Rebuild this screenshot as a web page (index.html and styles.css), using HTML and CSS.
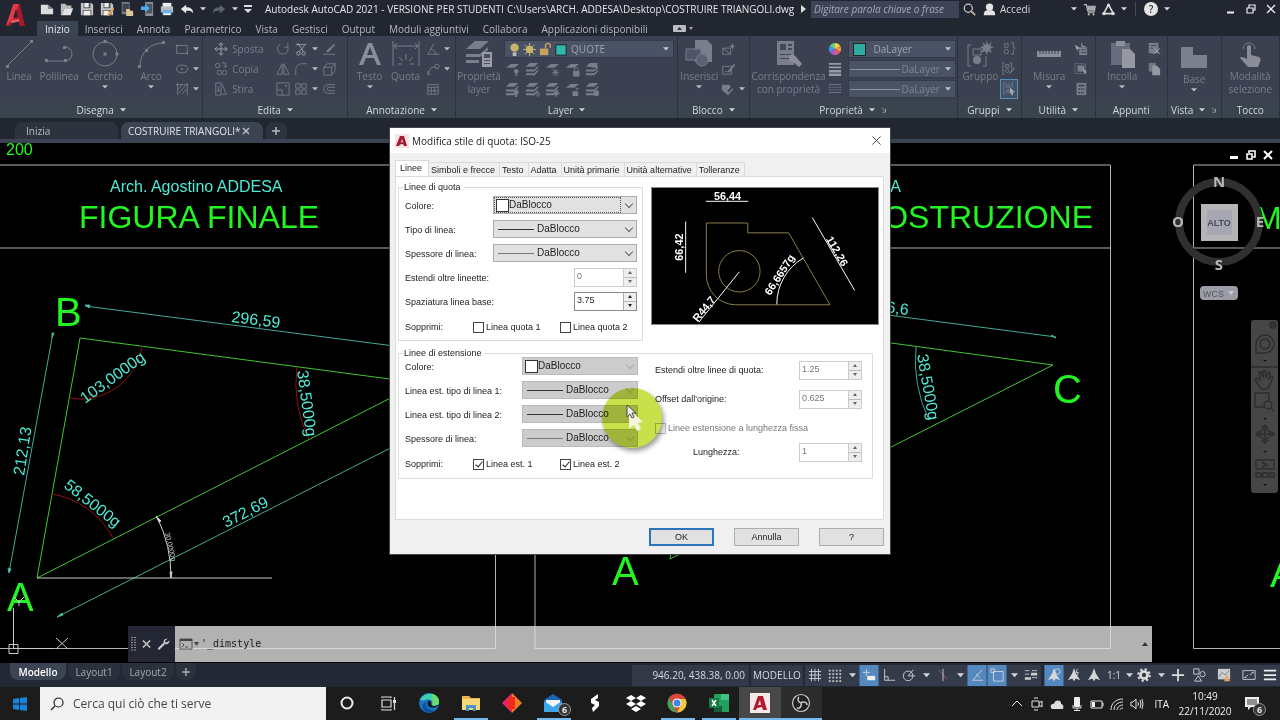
FILE: index.html
```
<!DOCTYPE html>
<html lang="it">
<head>
<meta charset="utf-8">
<title>Autodesk AutoCAD 2021 - COSTRUIRE TRIANGOLI.dwg</title>
<link rel="stylesheet" href="styles.css">
</head>
<body>
<svg class="defs" aria-hidden="true">
  <symbol id="dd" viewBox="0 0 8 5"><path d="M0 0h8L4 4.500z" fill="currentColor"/></symbol>
  <symbol id="rot" viewBox="0 0 16 16"><path d="M5 2.500A6 6 0 1 0 13.500 6M13.500 1.500v4.500h-4" class="ln"/></symbol>
  <symbol id="sheet" viewBox="0 0 16 16"><path d="M1 6l5-4h9l-5 4z" fill="currentColor"/></symbol>
  <symbol id="sheets" viewBox="0 0 16 16"><path d="M1 5l4-4h9l-4 4zM1 8h9l4-4v2l-4 4H1zM1 12h9l4-4v2l-4 4H1z" fill="currentColor"/></symbol>
  <symbol id="doc-a" viewBox="0 0 16 16"><path d="M8 0l2 6 5 8-5-2-2 3-2-3-5 2 5-8z" fill="currentColor"/></symbol>
</svg>

<header class="titlebar">
  <div class="brand"><svg viewBox="0 0 22 26"><path d="M8 1h7l6 24h-6l-1-5-7 1-2 4H0z" fill="#a8192c"/><path d="M8 1h6l-6 17-8 7z" fill="#df3a48"/><path d="M11 6l2 9-5 1z" fill="#20232d"/><path d="M6 19l8-2 1 3-9 2z" fill="#e2606a"/></svg></div>
  <div class="title-main">
    <div class="titlerow">
      <div class="quick">
        <button aria-label="Nuovo"><svg viewBox="0 0 16 16"><path d="M1 3h8l6 5v6H1z" fill="#dcdcdc"/><path d="M9 3v5h6z" fill="#888"/></svg></button>
        <button aria-label="Apri"><svg viewBox="0 0 16 16"><path d="M1 2h5l2 2h5v3H5l-3 8H1z" fill="#bbb"/><path d="M5 7h10l-3 8H2z" fill="#e4e4e4"/></svg></button>
        <button aria-label="Salva"><svg viewBox="0 0 16 16"><path d="M1 1h12l2 2v12H1z" fill="#c6c6c6"/><path d="M4 1h8v6H4zM3 9h10v6H3z" fill="#555"/><path d="M5 1h5v5H5zM4 10h8v5H4z" fill="#eee"/></svg></button>
        <button aria-label="Salva con nome"><svg viewBox="0 0 16 16"><path d="M1 1h12l2 2v12H1z" fill="#c6c6c6"/><path d="M4 1h8v6H4zM3 9h10v6H3z" fill="#555"/><path d="M5 1h5v5H5zM4 10h6v5H4z" fill="#eee"/><path d="M15 6l-6 7-1 3 3-1 5-7z" fill="#e7a65a"/></svg></button>
        <button aria-label="Apri da dispositivo mobile"><svg viewBox="0 0 16 16"><path d="M2 0h9v14H2z" fill="#777c86"/><path d="M3 2h7v9H3z" fill="#3d434e"/><path d="M7 8h4l1 2h3v6H7z" fill="#e0c690"/></svg></button>
        <button aria-label="Salva su dispositivo mobile"><svg viewBox="0 0 16 16"><path d="M6 0h9v16H6z" fill="#8c9099"/><path d="M7 2h7v11H7z" fill="#4a5560"/><path d="M1 5h5V2l5 5-5 5V9H1z" fill="#4faef0"/></svg></button>
        <button aria-label="Stampa"><svg viewBox="0 0 16 16"><path d="M3 1h10v5H3z" fill="#eee"/><path d="M1 5h14v7H1z" fill="#bdbdbd"/><path d="M3 9h10v6H3z" fill="#6bb3ea"/><path d="M4 13h8v2H4z" fill="#fff"/></svg></button>
        <button aria-label="Annulla"><svg viewBox="0 0 16 16"><path d="M1 8l6-5v3c5 0 8 2 8 7-2-3-4-3-8-3v3z" fill="#e6e6e6"/></svg></button>
        <svg class="dd"><use href="#dd"/></svg>
        <button aria-label="Ripeti"><svg viewBox="0 0 16 16"><path d="M15 8L9 3v3C4 6 1 8 1 13c2-3 4-3 8-3v3z" fill="#5c616c"/></svg></button>
        <svg class="dd"><use href="#dd"/></svg>
        <svg class="custom" viewBox="0 0 8 8"><path d="M0 0h8v2H0zM0 4h8L4 8z" fill="#ddd"/></svg>
      </div>
      <h1>Autodesk AutoCAD 2021 - VERSIONE PER STUDENTI</h1>
      <span class="path">C:\Users\ARCH. ADDESA\Desktop\COSTRUIRE TRIANGOLI.dwg</span>
      <svg class="tri" viewBox="0 0 5 8"><path d="M0 0l5 4-5 4z" fill="#ddd"/></svg>
      <input class="help-search" type="text" aria-label="Cerca" placeholder="Digitare parola chiave o frase">
      <div class="account">
        <button aria-label="Cerca"><svg viewBox="0 0 16 16"><circle cx="6.500" cy="6.500" r="5" fill="none" stroke="#ccc" stroke-width="1.500"/><path d="M10 10l5 5" stroke="#c9b59b" stroke-width="2"/></svg></button>
        <button class="login"><svg viewBox="0 0 16 16"><circle cx="8" cy="5" r="4.500" fill="#e4e4e4"/><path d="M1 15c0-5 2-6 5-6h4c3 0 5 1 5 6z" fill="#e4e4e4"/></svg>Accedi</button>
      </div>
      <div class="extras">
        <svg class="dd"><use href="#dd"/></svg>
        <button aria-label="App Store"><svg viewBox="0 0 16 16"><path d="M1 2h3l2 8h8l1-6H5M6 12h8" fill="none" stroke="#bbb" stroke-width="1.500"/><path d="M5 4h10l-1 5H6z" fill="#aaa"/><circle cx="7" cy="14" r="1.300" fill="#bbb"/><circle cx="13" cy="14" r="1.300" fill="#bbb"/></svg></button>
        <button aria-label="Autodesk"><svg viewBox="0 0 16 16"><path d="M8 2L2 13h12z" fill="none" stroke="#ddd" stroke-width="2"/><circle cx="8" cy="3" r="2" fill="#ddd"/><circle cx="2.500" cy="13" r="2.200" fill="#ddd"/><circle cx="13.500" cy="13" r="2.200" fill="#ddd"/></svg></button>
        <svg class="dd"><use href="#dd"/></svg>
        <i class="vsep"></i>
        <button class="help" aria-label="Guida">?</button>
        <svg class="dd"><use href="#dd"/></svg>
      </div>
      <div class="winbtns">
        <button aria-label="Riduci"><svg viewBox="0 0 10 10"><path d="M1 8.500h7" stroke="#eee" stroke-width="2"/></svg></button>
        <button aria-label="Ripristina"><svg viewBox="0 0 10 10"><path d="M1 4h6v5H1zM3 4V1h6v5H7" fill="none" stroke="#eee" stroke-width="1.200"/></svg></button>
        <button aria-label="Chiudi"><svg viewBox="0 0 10 10"><path d="M1 1l8 8M9 1L1 9" stroke="#eee" stroke-width="1.300"/></svg></button>
      </div>
    </div>
    <nav class="ribbon-tabs">
      <button class="on">Inizio</button><button>Inserisci</button><button>Annota</button><button>Parametrico</button><button>Vista</button><button>Gestisci</button><button>Output</button><button>Moduli aggiuntivi</button><button>Collabora</button><button>Applicazioni disponibili</button>
      <svg class="minrib" viewBox="0 0 20 8"><rect width="13" height="7" rx="1" fill="#b9bcc2"/><path d="M4 5h5L6.500 2z" fill="#333"/><path d="M16 2h4l-2 3z" fill="#aaa"/></svg>
    </nav>
  </div>
</header>

<section class="ribbon">
  <div class="panel p-dis">
    <div class="pbody">
      <button class="big w34"><svg viewBox="0 0 28 28"><path d="M2 26L26 2" class="ln"/><path d="M1 25h3v3H1zM25 0h3v3h-3z" fill="currentColor"/></svg>Linea</button>
      <button class="big w44"><svg viewBox="0 0 28 28"><path d="M2 21h18a7 7 0 0 0 0-14" class="ln"/><path d="M0 19h3v3H0zM19 19h3v3h-3zM18 6h3v3h-3z" fill="currentColor"/></svg>Polilinea</button>
      <button class="big w48"><svg viewBox="0 0 28 28"><circle cx="14" cy="14" r="12" class="ln"/><path d="M12.500 12.500h3v3h-3zM24.500 12.500h3v3h-3zM12.500 0h3v3h-3z" fill="currentColor"/></svg>Cerchio<svg class="dd"><use href="#dd"/></svg></button>
      <button class="big w44"><svg viewBox="0 0 28 28"><path d="M3 26C3 12 14 3 26 3" class="ln"/><path d="M1 25h3v3H1zM25 1h3v3h-3zM8 9h3v3H8z" fill="currentColor"/></svg>Arco<svg class="dd"><use href="#dd"/></svg></button>
      <div class="col">
        <button class="sm"><svg viewBox="0 0 16 16"><rect x="2" y="4" width="12" height="9" class="ln"/><path d="M1 3h2v2H1zM13 12h2v2h-2z" fill="currentColor"/></svg><svg class="dd"><use href="#dd"/></svg></button>
        <button class="sm"><svg viewBox="0 0 16 16"><ellipse cx="8" cy="8" rx="6.500" ry="4.500" class="ln"/><circle cx="8" cy="8" r="1.200" fill="currentColor"/></svg><svg class="dd"><use href="#dd"/></svg></button>
        <button class="sm"><svg viewBox="0 0 16 16"><path d="M3 1v14M14 1v14M4 8l4-5M4 13l9-10M8 14l5-6M1 3h14" class="ln"/></svg><svg class="dd"><use href="#dd"/></svg></button>
      </div>
    </div>
    <div class="cap">Disegna<svg class="dd"><use href="#dd"/></svg></div>
  </div>
  <div class="panel p-edi">
    <div class="pbody">
      <div class="col w62">
        <button class="sm"><svg viewBox="0 0 16 16"><path d="M8 1v14M1 8h14M5.500 3.500L8 1l2.500 2.500M5.500 12.500L8 15l2.500-2.500M3.500 5.500L1 8l2.500 2.500M12.500 5.500L15 8l-2.500 2.500" class="ln br"/></svg>Sposta</button>
        <button class="sm"><svg viewBox="0 0 16 16"><circle cx="4" cy="4" r="2.500" class="ln"/><circle cx="6" cy="12" r="2.500" class="ln"/><circle cx="12" cy="12" r="2.500" class="ln"/><path d="M9 1h4v5M11 4l2 2 2-2" class="ln"/></svg>Copia</button>
        <button class="sm"><svg viewBox="0 0 16 16"><path d="M2 1h6v14H2zM9 2l5 12H9M5 5v6M3 9l2 2 2-2" class="ln"/></svg>Stira</button>
      </div>
      <div class="col">
        <button class="sm"><svg><use href="#rot"/></svg></button>
        <button class="sm"><svg viewBox="0 0 16 16"><path d="M7 2v12H1zM9 2v12h6z" class="ln"/></svg></button>
        <button class="sm"><svg viewBox="0 0 16 16"><path d="M1 1h14v14H1zM1 9h6v6M10 4h2v2" class="ln"/></svg></button>
      </div>
      <div class="col">
        <button class="sm"><svg viewBox="0 0 16 16"><path d="M2 3h12M4 1l7 10M12 4L6 11" class="ln br"/><circle cx="5" cy="13" r="2" class="ln br"/><circle cx="11" cy="13" r="2" class="ln br"/></svg><svg class="dd"><use href="#dd"/></svg></button>
        <button class="sm"><svg viewBox="0 0 16 16"><path d="M2 15V9c0-4 3-7 7-7h6" class="ln"/></svg><svg class="dd"><use href="#dd"/></svg></button>
        <button class="sm"><svg viewBox="0 0 16 16"><path d="M2 2h5v5H2zM9 2h5v5H9zM2 9h5v5H2zM9 9h5v5H9z" class="ln"/></svg><svg class="dd"><use href="#dd"/></svg></button>
      </div>
      <div class="col">
        <button class="sm"><svg viewBox="0 0 16 16"><path d="M14 2l1 1-7 8-3 1 1-3z" fill="currentColor"/><path d="M1 14h14" class="ln"/></svg></button>
        <button class="sm"><svg viewBox="0 0 16 16"><path d="M2 6h9v9H2zM2 6l4-4h9v8l-4 5M11 6l4-4" class="ln"/></svg></button>
        <button class="sm"><svg viewBox="0 0 16 16"><path d="M15 3H7a5 5 0 0 0 0 10h8M15 6H8a2 2 0 0 0 0 4h7" class="ln"/></svg></button>
      </div>
    </div>
    <div class="cap">Edita<svg class="dd"><use href="#dd"/></svg></div>
  </div>
  <div class="panel p-ann">
    <div class="pbody">
      <button class="big w34"><svg viewBox="0 0 28 28"><path d="M12 3h4l9 22h-4l-3-7h-8l-3 7H3zM14 7l-3 8h6z" fill="#8b8e9b"/></svg>Testo<svg class="dd"><use href="#dd"/></svg></button>
      <button class="big w34"><svg viewBox="0 0 28 28"><path d="M1 1v25M27 1v25M2 6h24M5 3L2 6l3 3M23 3l3 3-3 3M14 14v6M7 17l4 4M21 17l-4 4M6 24h4M18 24h4" class="ln"/></svg>Quota</button>
      <div class="col">
        <button class="sm"><svg viewBox="0 0 16 16"><path d="M2 14L9 2M2 14h13M5 8q6 1 6 6" class="ln"/></svg><svg class="dd"><use href="#dd"/></svg></button>
        <button class="sm"><svg viewBox="0 0 16 16"><path d="M2 14l4-8h5M2 10v4h3" class="ln"/><circle cx="12.500" cy="5" r="2.500" class="ln"/></svg><svg class="dd"><use href="#dd"/></svg></button>
        <button class="sm"><svg viewBox="0 0 16 16"><path d="M2 3h12v11H2zM2 6h12M2 10h12M6 6v8M10 6v8" class="ln"/></svg></button>
      </div>
    </div>
    <div class="cap">Annotazione<svg class="dd"><use href="#dd"/></svg></div>
  </div>
  <div class="panel p-lay">
    <div class="pbody">
      <button class="big w46"><svg viewBox="0 0 28 28"><path d="M1 9l9-8h14l-9 8zM1 14h14l8-7v3l-8 7H1zM1 20h13v3H1z" fill="currentColor"/><path d="M17 12h10v15H17z" fill="#9a9ca6"/><path d="M19 14h6v4h-6zM19 20h6v1h-6zM19 23h6v1h-6z" fill="#4a4e5e"/></svg><span>Proprietà<br>layer</span></button>
      <div class="laygrid">
        <div class="combo">
          <svg class="states" viewBox="0 0 64 16"><circle cx="7" cy="6" r="4.500" fill="#c9b36a"/><path d="M5 11h4v4H5z" fill="#bbb"/><circle cx="23" cy="8" r="4" fill="#c9b36a"/><path d="M23 1v14M16 8h14M18 3l10 10M28 3L18 13" stroke="#c9b36a"/><path d="M34 7h9v7h-9z" fill="#c9a35a"/><path d="M40 7V4a2.500 2.500 0 0 1 5 0v2" fill="none" stroke="#c9a35a" stroke-width="1.500"/><rect x="51" y="3" width="11" height="11" fill="#2eb8aa" stroke="#222"/></svg>
          <select aria-label="Layer corrente"><option>QUOTE</option></select><svg class="dd"><use href="#dd"/></svg>
        </div>
        <div class="icons5">
          <svg viewBox="0 0 16 16"><use href="#sheet"/><circle cx="12" cy="10" r="2.500" fill="currentColor"/><path d="M11 13h2v2h-2z" fill="currentColor"/></svg>
          <svg viewBox="0 0 16 16"><use href="#sheets"/><path d="M9 15l5-6" class="ln"/></svg>
          <svg viewBox="0 0 16 16"><use href="#sheet"/><path d="M11 7v8M7 11h8M8 8l6 6M14 8l-6 6" class="ln"/></svg>
          <svg viewBox="0 0 16 16"><use href="#sheet"/><path d="M9 10h6v5H9zM10 10V8a2 2 0 0 1 4 0v2" class="ln"/><path d="M9 10h6v5H9z" fill="currentColor"/></svg>
          <svg viewBox="0 0 16 16"><use href="#sheets"/><path d="M7 1h6v5H7z" fill="currentColor"/></svg>
        </div>
        <div class="icons5">
          <svg viewBox="0 0 16 16"><use href="#sheets"/><circle cx="12" cy="11" r="2.500" fill="currentColor"/><path d="M11 13h2v3h-2z" fill="currentColor"/></svg>
          <svg viewBox="0 0 16 16"><use href="#sheets"/><path d="M8 15l5-5v5h2v-4" class="ln"/></svg>
          <svg viewBox="0 0 16 16"><use href="#sheets"/><circle cx="12" cy="12" r="2.500" fill="currentColor"/><path d="M12 8v8M8 12h8" class="ln"/></svg>
          <svg viewBox="0 0 16 16"><use href="#sheet"/><path d="M8 10h6v5H8z" fill="currentColor"/><path d="M12 10V7a2 2 0 0 1 3 1" class="ln"/></svg>
          <svg viewBox="0 0 16 16"><use href="#sheets"/><circle cx="12" cy="12" r="3" fill="currentColor"/></svg>
        </div>
      </div>
    </div>
    <div class="cap">Layer<svg class="dd"><use href="#dd"/></svg></div>
  </div>
  <div class="panel p-blo">
    <div class="pbody">
      <button class="big w40"><svg viewBox="0 0 28 28"><path d="M10 0h12l5 5v17H10z" fill="currentColor"/><path d="M1 9h15v11H1z" fill="#50546a" stroke="currentColor"/><circle cx="17" cy="20" r="6" fill="#5c6070" stroke="currentColor"/></svg>Inserisci<svg class="dd"><use href="#dd"/></svg></button>
      <div class="col">
        <button class="sm"><svg viewBox="0 0 16 16"><path d="M2 7h9v7H2zM2 7l9 7" class="ln"/><path d="M13 1l1 3 2 1-2 1-1 3-1-3-3-1 3-1z" fill="currentColor"/></svg></button>
        <button class="sm"><svg viewBox="0 0 16 16"><path d="M2 5h10v9H2zM5 11h6" class="ln"/><path d="M15 2l-7 8 1 2 7-8z" fill="currentColor"/></svg></button>
        <button class="sm"><svg viewBox="0 0 16 16"><path d="M1 3h8l5 5-6 7-7-6z" fill="currentColor"/><path d="M15 3L8 11" stroke="#383d4d" stroke-width="2"/></svg><svg class="dd"><use href="#dd"/></svg></button>
      </div>
    </div>
    <div class="cap">Blocco<svg class="dd"><use href="#dd"/></svg></div>
  </div>
  <div class="panel p-pro">
    <div class="pbody">
      <button class="big w76"><svg viewBox="0 0 28 28"><path d="M2 1h17v24H2z" fill="currentColor"/><path d="M5 4h6v6H5zM13 4h4v2h-4zM13 8h4v2h-4zM5 14h11v1H5zM5 18h11v1H5z" fill="#42475a"/><path d="M14 16l4-2 4 4 5 6-3 3-6-5-4-1z" fill="#8b8d99"/></svg><span>Corrispondenza<br>con proprietà</span></button>
      <div class="props">
        <svg viewBox="0 0 16 16"><path d="M8 8V1a7 7 0 0 1 6 3.500z" fill="#f9d24a"/><path d="M8 8l6-3.500a7 7 0 0 1 0 7z" fill="#f1953e"/><path d="M8 8l6 3.500A7 7 0 0 1 8 15z" fill="#e25b6c"/><path d="M8 8v7a7 7 0 0 1-6-3.500z" fill="#a35bd0"/><path d="M8 8l-6 3.500a7 7 0 0 1 0-7z" fill="#3f9be8"/><path d="M8 8L2 4.500A7 7 0 0 1 8 1z" fill="#5fd08a"/></svg>
        <div class="combo"><i class="swatch"></i><select aria-label="Colore oggetto"><option>DaLayer</option></select><svg class="dd"><use href="#dd"/></svg></div>
        <svg viewBox="0 0 16 16"><path d="M1 2h14M1 6h14" stroke="#999ca6" stroke-width="2"/><path d="M1 10.500h14M1 14.500h14" stroke="#999ca6" stroke-width="3"/></svg>
        <div class="combo line"><select aria-label="Spessore di linea"><option>DaLayer</option></select><svg class="dd"><use href="#dd"/></svg></div>
        <svg viewBox="0 0 16 16"><path d="M1 3h14M1 12h14" stroke="#7c8090"/><path d="M1 6h14M1 9h14" stroke="#7c8090" stroke-dasharray="2 1"/></svg>
        <div class="combo line"><select aria-label="Tipo di linea"><option>DaLayer</option></select><svg class="dd"><use href="#dd"/></svg></div>
      </div>
    </div>
    <div class="cap">Proprietà<svg class="dd"><use href="#dd"/></svg><svg class="launch" viewBox="0 0 8 8"><path d="M1 1l5 5M6 2v5H2" class="ln br"/></svg></div>
  </div>
  <div class="panel p-gru">
    <div class="pbody">
      <button class="big w40"><svg viewBox="0 0 28 28"><path d="M5 5H2v21h3M17 26h3V16" class="ln"/><rect x="7" y="9" width="8" height="6" class="ln"/><circle cx="11" cy="20" r="4" fill="currentColor"/><path d="M21 0l1 5 4-3-2 4 4 1-4 2 2 4-4-2-1 4-2-4-4 2 2-4-3-2 4-1-2-4 4 3z" fill="currentColor"/></svg>Gruppo</button>
      <div class="col">
        <button class="sm"><svg viewBox="0 0 16 16"><path d="M3 2h4v4H3zM10 1h3v5l2 1-2 2v5h-3" class="ln"/><circle cx="5" cy="11" r="2.500" class="ln"/></svg></button>
        <button class="sm"><svg viewBox="0 0 16 16"><path d="M3 1H1v13h2M9 1h2v7M4 3h4v3H4z" class="ln"/><circle cx="6" cy="10" r="2" class="ln"/><path d="M14 7l-5 6" class="ln br"/></svg></button>
        <button class="sm pressed"><svg viewBox="0 0 16 16"><path d="M4 1H2v13h2M10 1h2v5M5 3h4v3H5zM5 9h3v3H5z" class="ln"/><path d="M9 6l6 6-3 0 1 3-2 0-1-3-1 2z" fill="#aaa"/></svg></button>
      </div>
    </div>
    <div class="cap">Gruppi<svg class="dd"><use href="#dd"/></svg></div>
  </div>
  <div class="panel p-uti">
    <div class="pbody">
      <button class="big w46"><svg viewBox="0 0 28 28"><path d="M2 11h24v6H2z" fill="#8b8e9b"/><path d="M5 11v3M8 11v3M11 11v3M14 11v3M17 11v3M20 11v3M23 11v3" stroke="#3f4354"/></svg>Misura<svg class="dd"><use href="#dd"/></svg></button>
      <div class="col">
        <button class="sm"><svg viewBox="0 0 16 16"><path d="M6 6h9v9H6z" fill="currentColor"/><path d="M8 9h6M8 12h6" stroke="#3f4354"/><path d="M1 3l6 4-3 1v3z" fill="#aaa"/><path d="M9 1v4h4" class="ln br"/></svg></button>
        <button class="sm"><svg viewBox="0 0 16 16"><path d="M1 2h12v11H1z" class="ln" stroke-dasharray="2 1"/><path d="M4 4h8v7H4z" fill="currentColor"/><path d="M10 7l5 5h-2v3z" fill="#aaa"/></svg></button>
        <button class="sm"><svg viewBox="0 0 16 16"><path d="M3 1h11v14H3z" fill="currentColor"/><path d="M5 3h7v2H5zM5 7h2v2H5zM8 7h2v2H8zM11 7h1v2h-1zM5 11h2v2H5zM8 11h2v2H8zM11 11h1v2h-1z" fill="#3f4354"/></svg></button>
      </div>
    </div>
    <div class="cap">Utilità<svg class="dd"><use href="#dd"/></svg></div>
  </div>
  <div class="panel p-app">
    <div class="pbody">
      <button class="big w46"><svg viewBox="0 0 28 28"><path d="M3 3h19v22H3z" fill="#686c7c"/><path d="M8 1h9v5H8z" fill="#8d909b"/><path d="M14 9h8l5 5v14H14z" fill="#9698a2"/></svg>Incolla<svg class="dd"><use href="#dd"/></svg></button>
      <div class="col">
        <button class="sm"><svg viewBox="0 0 16 16"><path d="M2 1h11v12H2z" fill="currentColor"/><path d="M4 4h7M4 7h5" stroke="#3f4354"/><path d="M7 6l8 8M15 7l-8 7" class="ln br"/></svg></button>
        <button class="sm"><svg viewBox="0 0 16 16"><path d="M2 1h8v10H2z" fill="#737685"/><path d="M6 4h5l4 4v7H6z" fill="#9698a2"/></svg></button>
      </div>
    </div>
    <div class="cap">Appunti</div>
  </div>
  <div class="panel p-vis">
    <div class="pbody"><button class="big tall w46"><svg viewBox="0 0 28 28"><path d="M1 4h12v8h14v13H1z" fill="#7c7f8d"/></svg>Base<svg class="dd"><use href="#dd"/></svg></button></div>
    <div class="cap">Vista<svg class="dd"><use href="#dd"/></svg><svg class="launch" viewBox="0 0 8 8"><path d="M1 1l5 5M6 2v5H2" class="ln br"/></svg></div>
  </div>
  <div class="panel p-toc">
    <div class="pbody"><button class="big w50"><svg viewBox="0 0 28 28"><path d="M11 7a2 2 0 0 1 4 0v8l8 2c2 1 2 3 1 5l-2 5H12l-8-9c1-2 4-1 7 1z" fill="#8a8c98"/><path d="M7 9a6 6 0 1 1 12 0" class="ln"/></svg><span>Modalità<br>selezione</span></button></div>
    <div class="cap">Tocco</div>
  </div>
</section>

<nav class="doctabs">
  <button class="dt start">Inizia</button>
  <button class="dt on">COSTRUIRE TRIANGOLI*<svg viewBox="0 0 8 8"><path d="M1 1l6 6M7 1L1 7" stroke="#bbb" stroke-width="1.500"/></svg></button>
  <button class="dt plus" aria-label="Nuova scheda"><svg viewBox="0 0 8 8"><path d="M4 0v8M0 4h8" stroke="#bbb" stroke-width="1.500"/></svg></button>
</nav>

<main class="canvas">
  <svg class="drawing" viewBox="0 143 1280 520" preserveAspectRatio="xMidYMid slice">
    <g class="frame">
      <path d="M0 165H495.500V648.500H0M0 248H495"/>
      <path d="M535 165H1110.500V648.500H535zM535 248H1110"/>
      <path d="M1280 165H1193.500V648.500H1280M1193 248H1280"/>
    </g>
    <g class="green">
      <path d="M80 338L420 383L37 578z"/>
      <path d="M891 343L1053 365L670 559L680 500"/>
    </g>
    <g class="cy">
      <path d="M85 306L425 350M53 333L9 573M57 617L430 428M880 314L1056 337"/>
      <path d="M916 347A138 138 0 0 0 929 420"/>
      <path class="tip" d="M85 305l5 0-1 3zM52 333l2 0-2 5zM9 573l-1-5 3 1zM57 617l5-4 1 2zM1056 338l-5-2 1-1z"/>
    </g>
    <g class="red">
      <path d="M142 346A62 62 0 0 1 70 398M52 494A85 85 0 0 1 113 538M297 367A124 124 0 0 0 309 439"/>
    </g>
    <g class="white"><path d="M37 578H272M157 517A134 134 0 0 1 171 578"/><path d="M156 516l5 5-2 1zM171 578l-1-6h2z" fill="#ddd"/></g>
    <g class="gt">
      <text x="6" y="155" font-size="16">200</text>
      <text x="79" y="228" font-size="32">FIGURA FINALE</text>
      <text x="1093" y="228" font-size="32" text-anchor="end">COSTRUZIONE</text>
      <text x="1255" y="229" font-size="32">M</text>
      <text x="55" y="326" font-size="40">B</text>
      <text x="7" y="611" font-size="40">A</text>
      <text x="612" y="585" font-size="40">A</text>
      <text x="1053" y="403" font-size="40">C</text>
      <text x="1270" y="587" font-size="40">A</text>
    </g>
    <g class="ct">
      <text x="110" y="192">Arch. Agostino ADDESA</text>
      <text x="901" y="192" text-anchor="end">Arch. Agostino ADDESA</text>
      <text transform="translate(231 322) rotate(7)">296,59</text>
      <text transform="translate(908 315) rotate(7)" text-anchor="end">296,6</text>
      <text transform="translate(24 476) rotate(-81)">212,13</text>
      <text transform="translate(226 528) rotate(-27)">372,69</text>
      <text transform="translate(85 404) rotate(-36)">103,0000g</text>
      <text transform="translate(63 487) rotate(38)">58,5000g</text>
      <text transform="translate(297 371) rotate(82)">38,5000g</text>
      <text transform="translate(917 355) rotate(80)">38,5000g</text>
      <text class="tiny" transform="translate(165 533) rotate(77)">30,0000g</text>
    </g>
    <g class="ucs"><path d="M13.500 608V648.500H54M9 644.500h9v9H9zM56 638l12 11M68 638L56 649M14 597l5 5 5-5M19 602v4"/></g>
    <g class="cube">
      <circle cx="1219" cy="222" r="40"/>
      <rect x="1201" y="204" width="37" height="37" fill="#b5b5b7"/><rect x="1207" y="210" width="25" height="25" fill="#a6a7b0"/>
      <text x="1219" y="226" class="alto">ALTO</text>
      <text x="1219" y="187">N</text><text x="1219" y="270">S</text><text x="1178" y="227">O</text><text x="1260" y="227">E</text>
      <rect x="1200" y="286" width="38" height="14" rx="4" fill="#9d9da8"/><text x="1203" y="297" class="wcs">WCS</text><path d="M1228 291h6l-3 4z" fill="#c8c8d4"/>
    </g>
    <g class="nav">
      <rect x="1251" y="320" width="27" height="173" rx="3"/>
      <g class="ni"><circle cx="1273" cy="325" r="3"/><path d="M1271 323l4 4M1275 323l-4 4"/><path d="M1256 344a9 9 0 1 1 9 9h-9z"/><circle cx="1265" cy="344" r="5"/><path d="M1251 367h27"/>
      <path d="M1258 384l-3-5 2-1 3 2-1-8 2 0 2 6 0-7 2 0 1 7 2-6 2 1-1 6 3-3 1 1-3 8-3 4h-6z"/>
      <path d="M1255 393h14v7M1255 393v14h9"/><circle cx="1268" cy="405" r="4"/><path d="M1271 408l3 3"/>
      <path d="M1265 425v18M1256 434h18M1262 428l3-3 3 3M1262 440l3 3 3-3M1259 431l-3 3 3 3M1271 431l3 3-3 3"/><circle cx="1265" cy="434" r="5"/>
      <path d="M1256 460h18v9h-18zM1262 462l5 3-5 2M1256 473h5v4h-5zM1263 473h5v4h-5zM1270 473h4v4h-4z"/></g>
      <path d="M1263 360h4l-2 2zM1263 418h4l-2 2zM1263 451h4l-2 2zM1263 484h4l-2 2z" fill="#111"/>
    </g>
  </svg>
  <div class="docbtns">
    <button aria-label="Riduci disegno"><svg viewBox="0 0 10 10"><path d="M1 7.500h8" stroke="#fff" stroke-width="3"/></svg></button>
    <button aria-label="Ripristina disegno"><svg viewBox="0 0 10 10"><path d="M1 4h5v5H1zM3 3V1h6v6H7" fill="none" stroke="#fff" stroke-width="1.600"/></svg></button>
    <button aria-label="Chiudi disegno"><svg viewBox="0 0 10 10"><path d="M1 1l8 8M9 1L1 9" stroke="#fff" stroke-width="2"/></svg></button>
  </div>
  <form class="cmd">
    <div class="cmdtools">
      <svg viewBox="0 0 5 16"><path d="M1 1v15M4 1v15" stroke="#bbb" stroke-width="1.500" stroke-dasharray="1 1.500"/></svg>
      <button type="button" aria-label="Chiudi riga di comando"><svg viewBox="0 0 10 10"><path d="M1 1l8 8M9 1L1 9" stroke="#ccc" stroke-width="1.600"/></svg></button>
      <button type="button" aria-label="Personalizza"><svg viewBox="0 0 14 14"><path d="M1 13L8 6" stroke="#ccc" stroke-width="2.500"/><path d="M12 1L9 3v2h2l3-2c0 4-3 5-5 4L7 5c0-3 2-5 5-4z" fill="#ccc"/></svg></button>
    </div>
    <label class="prompt" for="cmdline"><svg viewBox="0 0 20 12"><path d="M1 1h12v10H1z" fill="none" stroke="#555"/><path d="M1 1h12v2H1z" fill="#444"/><path d="M3 5l2 2-2 2M6 9h3" fill="none" stroke="#555"/><path d="M15 4h5l-2.500 4z" fill="#444"/></svg></label>
    <input id="cmdline" type="text" aria-label="Riga di comando" value="'_dimstyle">
    <svg class="cmdup" viewBox="0 0 6 4"><path d="M0 4h6L3 0z" fill="#333"/></svg>
  </form>
</main>

<footer class="status">
  <nav class="layouts"><button class="on">Modello</button><button>Layout1</button><button>Layout2</button><button aria-label="Nuovo layout"><svg viewBox="0 0 8 8"><path d="M4 0v8M0 4h8" stroke="#aaa" stroke-width="1.500"/></svg></button></nav>
  <div class="stright">
    <span class="coord">946.20, 438.38, 0.00</span><button class="model">MODELLO</button>
    <div class="sticons">
      <button><svg viewBox="0 0 16 16"><path d="M4 1v14M8 1v14M12 1v14M1 4h14M1 8h14M1 12h14" class="st"/></svg></button>
      <button><svg viewBox="0 0 16 16"><path d="M1 3h14M1 7h14M1 11h14M1 15h14" stroke="#ccc" stroke-width="2" stroke-dasharray="2 2"/></svg></button>
      <button class="n"><svg class="dd"><use href="#dd"/></svg></button>
      <button class="act"><svg viewBox="0 0 16 16"><path d="M5 1v8M1 5h8" class="st"/><path d="M6 9h9v5H6z" fill="#eee"/></svg></button>
      <button><svg viewBox="0 0 16 16"><path d="M3 1v13h12M3 10h4v4" class="st"/></svg></button>
      <button><svg viewBox="0 0 16 16"><circle cx="7" cy="9" r="5.500" class="st"/><path d="M7 9h8M7 9l6-7" class="st"/></svg></button>
      <button class="n"><svg class="dd"><use href="#dd"/></svg></button>
      <button><svg viewBox="0 0 16 16"><path d="M3 2l10 11" stroke="#b65b5b"/><path d="M8 1v14" class="st"/></svg></button>
      <button class="n"><svg class="dd"><use href="#dd"/></svg></button>
      <button class="act"><svg viewBox="0 0 16 16"><path d="M14 2L3 14h12" class="st"/><path d="M7 7l4 4" class="st"/></svg></button>
      <button class="act"><svg viewBox="0 0 16 16"><path d="M4 4h11v11H4zM1 1h4v4H1z" class="st"/></svg></button>
      <button class="n"><svg class="dd"><use href="#dd"/></svg></button>
      <button><svg viewBox="0 0 16 16"><path d="M1 3h5M1 7h5M9 3h6M9 11h6" stroke="#ccc"/><path d="M1 12h7M8 7h7" stroke="#ccc" stroke-width="3"/></svg></button>
      <i class="gap"></i>
      <button class="act"><svg viewBox="0 0 16 16"><use href="#doc-a"/><circle cx="12" cy="4" r="3" class="st"/></svg></button>
      <button><svg viewBox="0 0 16 16"><use href="#doc-a"/><path d="M12 1l-2 4h3l-2 4" class="st"/></svg></button>
      <button><svg viewBox="0 0 16 16"><use href="#doc-a"/></svg></button>
      <button class="scale">1:1</button>
      <button class="nn"><svg class="dd"><use href="#dd"/></svg></button>
      <button><svg viewBox="0 0 16 16"><circle cx="8" cy="8" r="4" fill="none" stroke="#ddd" stroke-width="3"/><circle cx="8" cy="8" r="6.500" fill="none" stroke="#ddd" stroke-width="2.500" stroke-dasharray="2.500 2.600"/></svg></button>
      <button class="n"><svg class="dd"><use href="#dd"/></svg></button>
      <button><svg viewBox="0 0 16 16"><path d="M8 1v14M1 8h14" stroke="#ddd" stroke-width="2"/></svg></button>
      <button class="w22"><svg viewBox="0 0 16 16"><path d="M2 1h6v6H2zM7 9l4 6H3z" class="st"/><circle cx="12" cy="7" r="3" class="st"/></svg></button>
      <button class="w28"><svg viewBox="0 0 16 16"><path d="M1 1h14v12H1z" fill="#ccc"/><path d="M2 10l4-5 3 3 5-5" fill="none" stroke="#777"/><path d="M11 7l4 8H8z" fill="#e8a36a"/></svg></button>
      <button class="w22"><svg viewBox="0 0 16 16"><path d="M1 3h14v10H1zM3 10v1h2M13 6V5h-2M4 10l3-2M12 6L9 8" class="st"/></svg></button>
      <button><svg viewBox="0 0 16 16"><path d="M1 3h14M1 8h14M1 13h14" stroke="#eee" stroke-width="2"/></svg></button>
    </div>
  </div>
</footer>

<footer class="taskbar">
  <button class="win" aria-label="Start"><svg viewBox="0 0 14 14"><path d="M0 2l6-1v5.500H0zM7 1l7-1v6.500H7zM0 7.500h6V13l-6-1zM7 7.500h7V14l-7-1z" fill="#1683dc"/></svg></button>
  <label class="wsearch"><svg viewBox="0 0 14 14"><circle cx="8.500" cy="5.500" r="4.500" fill="none" stroke="#222" stroke-width="1.200"/><path d="M5 9l-4 4" stroke="#222" stroke-width="1.300"/></svg><input type="text" aria-label="Cerca" placeholder="Cerca qui ciò che ti serve"></label>
  <div class="apps">
    <button><svg viewBox="0 0 20 20"><circle cx="10" cy="10" r="5.500" fill="none" stroke="#eee" stroke-width="2"/></svg></button>
    <button><svg viewBox="0 0 20 20"><path d="M4 7h9v7H4zM4 5V4h9v1M4 16v1h9v-1M16.500 4v3M16.500 10v7" fill="none" stroke="#ddd" stroke-width="1.200"/><path d="M15 7h3v3h-3z" fill="#ddd"/></svg></button>
    <button><svg viewBox="0 0 20 20"><circle cx="10" cy="10" r="10" fill="#1a74c8"/><path d="M1 7C5-2 19-1 20 8c0 5-5 5-7 4 2-4-3-7-7-5-3 1-4 0-5 0z" fill="#3fd0b0"/><path d="M13 1c5 1 8 5 7 9-1 3-5 3-7 2l1-4z" fill="#6ddc6a"/><path d="M7 9c-2 6 4 9 9 8-6 6-16 0-11-7z" fill="#0d4f9c"/><path d="M9 8c-2 5 2 8 8 6l2-1v-1c-3 2-7 1-7-1 1-2-1-4-3-3z" fill="#1c1c1c"/></svg></button>
    <button class="run"><svg viewBox="0 0 20 20"><path d="M1 3h7l2 2h9v12H1z" fill="#e7b64a"/><path d="M1 6h18v11H1z" fill="#f7d777"/><path d="M5 18v-6h10v6h-3v-3H8v3z" fill="#4a92cc"/></svg></button>
    <button><svg viewBox="0 0 20 20"><path d="M10 0v20L0 10z" fill="#e8236b"/><path d="M10 0l10 10-10 10z" fill="#ef7d23"/><path d="M6 4h7v12H6z" fill="#ef2b20"/></svg></button>
    <button class="run badge"><svg viewBox="0 0 20 20"><path d="M1 7l9-6 9 6v12H1z" fill="#1b65b5"/><path d="M3 7h14v9H3z" fill="#f1f6fa"/><path d="M1 8l9 6 9-6v11H1z" fill="#3ba7ea"/></svg><b>6</b></button>
    <button><svg viewBox="0 0 20 20"><path d="M13 1L6 6v4l4 2-3 3 1 4 6-6V9l-4-2 3-2z" fill="#fff"/></svg></button>
    <button><svg viewBox="0 0 20 20"><path d="M5 2l5 3-5 3-5-3zM15 2l5 3-5 3-5-3zM5 8l5 3-5 3-5-3zM15 8l5 3-5 3-5-3zM10 13l5 3-5 3-5-3z" fill="#fff"/></svg></button>
    <button class="run"><svg viewBox="0 0 20 20"><circle cx="10" cy="10" r="9.500" fill="#d9473c"/><path d="M2 5l6 11 2 3.500A9.500 9.500 0 0 1 2 5z" fill="#43a25a"/><path d="M10 6h8.600a9.500 9.500 0 0 1-8.600 13.500L14 12z" fill="#f0c83c"/><circle cx="10" cy="10" r="4.500" fill="#fff"/><circle cx="10" cy="10" r="3.500" fill="#4385e8"/></svg></button>
    <button class="run"><svg viewBox="0 0 20 20"><path d="M5 1h15v18H5z" fill="#22a060"/><path d="M12 1h8v6h-8z" fill="#41c483"/><path d="M5 13h8v6H5z" fill="#155f38"/><path d="M0 5h10v10H0z" fill="#137c42"/><path d="M3 7l4 6M7 7l-4 6" stroke="#fff" stroke-width="1.500"/></svg></button>
    <button class="run cur"><svg viewBox="0 0 20 20"><path d="M0 0h20v20H0z" fill="#f5e8e6"/><path d="M8 3h5l4 14h-4l-1-3-5 1-1 2H3z" fill="#b01c2e"/><path d="M10 7l1 5-3 0z" fill="#f5e8e6"/></svg></button>
    <button class="run cur2"><svg viewBox="0 0 20 20"><circle cx="10" cy="10" r="8.500" fill="#222" stroke="#ccc" stroke-width="1.200"/><path d="M10 10c-3-1-4-4-2-6M10 10c2-2 6-1 6 2M10 10c1 3-1 6-4 5" fill="none" stroke="#ccc" stroke-width="1.500"/></svg></button>
  </div>
  <div class="tray">
    <svg viewBox="0 0 14 14"><path d="M2 9l5-5 5 5" class="tr"/></svg>
    <svg viewBox="0 0 14 14"><path d="M2 4h7v6H2zM9 6l3-2v6L9 8M4 1h4M4 13h4" class="tr"/></svg>
    <svg viewBox="0 0 14 14"><path d="M2 12c-3-3 0-6 2-5 1-5 8-4 7 0 3 0 3 5 1 5z" fill="#ddd"/></svg>
    <svg viewBox="0 0 14 14"><rect x="4" y="0" width="6" height="10" rx="1" fill="#eee"/><path d="M3 8v3h8V8M7 11v3M4 13.500h6" class="tr"/></svg>
    <svg viewBox="0 0 14 14"><path d="M1 4h11v7H1zM12 6h1v3h-1" class="tr"/><path d="M2 5h3v5H2z" fill="#eee"/></svg>
    <svg viewBox="0 0 14 14"><path d="M1 13C1 6 6 2 13 2M4 13c0-5 4-8 9-8M7 13c0-3 3-5 6-5M10 13c0-1 1-2 3-2" class="tr"/></svg>
    <svg viewBox="0 0 14 14"><path d="M1 5h2l3-3v10L3 9H1zM8 5q1 2 0 4M10 3q2 4 0 8M12 2q2 5 0 10" class="tr"/></svg>
    <span class="ita">ITA</span>
    <div class="clock">10:49<br>22/11/2020</div>
    <button class="notif" aria-label="Notifiche"><svg viewBox="0 0 14 14"><path d="M0 0h14v10H6l-3 3v-3H0z" fill="#eee"/><path d="M2 3h10M2 5h10M2 7h10" stroke="#333"/></svg><b>6</b></button>
  </div>
</footer>

<div class="overlay">
<section class="dialog" role="dialog" aria-labelledby="dtitle">
  <header class="dhead"><svg viewBox="0 0 14 14"><path d="M0 0h14v14H0z" fill="#f6e3e4"/><path d="M5 2h4l3 10H9L8 10l-3 .500L4 12H1z" fill="#a3192d"/><path d="M7 5l1 3-2 .500z" fill="#f6e3e4"/></svg><h2 id="dtitle">Modifica stile di quota: ISO-25</h2><button aria-label="Chiudi"><svg viewBox="0 0 10 10"><path d="M.500 .500l9 9M9.500 .500l-9 9" stroke="#333"/></svg></button></header>
  <div class="dtabs" role="tablist">
    <button class="on" role="tab">Linee</button><button role="tab">Simboli e frecce</button><button role="tab">Testo</button><button role="tab">Adatta</button><button role="tab">Unità primarie</button><button role="tab">Unità alternative</button><button role="tab">Tolleranze</button>
  </div>
  <div class="page">
    <div class="top">
      <fieldset class="fs1">
        <legend>Linee di quota</legend>
        <label for="c1">Colore:</label><div class="sel color focus"><select id="c1"><option>DaBlocco</option></select></div>
        <label for="t1">Tipo di linea:</label><div class="sel ltype"><select id="t1"><option>DaBlocco</option></select></div>
        <label for="s1">Spessore di linea:</label><div class="sel ltype thin"><select id="s1"><option>DaBlocco</option></select></div>
        <label for="e1">Estendi oltre lineette:</label><div class="spin off"><input id="e1" type="text" value="0" disabled><span><button disabled aria-label="Su"></button><button disabled aria-label="Giù"></button></span></div>
        <label for="b1">Spaziatura linea base:</label><div class="spin"><input id="b1" type="text" value="3.75"><span><button aria-label="Su"></button><button aria-label="Giù"></button></span></div>
        <div class="checks"><span>Sopprimi:</span><label><input type="checkbox">Linea quota 1</label><label><input type="checkbox">Linea quota 2</label></div>
      </fieldset>
      <svg class="preview" viewBox="651 188 228 138">
        <g fill="none" stroke="#8a7f4c"><path d="M705.500 276V223.500H747.500V233.500H789L831 306.500H735A30 30 0 0 1 705.500 276z"/><circle cx="739" cy="272.500" r="21"/></g>
        <g fill="none" stroke="#fff"><path d="M705 201.500h43M684.500 222v52M813 218l43 74M739 273l-41 51M777 306A54 54 0 0 1 804 259"/></g>
        <g class="pt"><text x="727" y="200">56,44</text><text transform="translate(682 248) rotate(-90)">66,42</text><text transform="translate(835 254) rotate(60)">112,26</text><text transform="translate(783 278) rotate(-57)">66,6657g</text><text transform="translate(706 313) rotate(-51)">R44,7</text></g>
      </svg>
    </div>
    <fieldset class="fs2">
      <legend>Linee di estensione</legend>
      <div class="left">
        <label for="c2">Colore:</label><div class="sel color off"><select id="c2" disabled><option>DaBlocco</option></select></div>
        <label for="l1">Linea est. tipo di linea 1:</label><div class="sel ltype off"><select id="l1" disabled><option>DaBlocco</option></select></div>
        <label for="l2">Linea est. tipo di linea 2:</label><div class="sel ltype off"><select id="l2" disabled><option>DaBlocco</option></select></div>
        <label for="s2">Spessore di linea:</label><div class="sel ltype thin off"><select id="s2" disabled><option>DaBlocco</option></select></div>
        <div class="checks"><span>Sopprimi:</span><label><input type="checkbox" checked>Linea est. 1</label><label><input type="checkbox" checked>Linea est. 2</label></div>
      </div>
      <div class="right">
        <label for="r1">Estendi oltre linee di quota:</label><div class="spin off"><input id="r1" type="text" value="1.25" disabled><span><button disabled aria-label="Su"></button><button disabled aria-label="Giù"></button></span></div>
        <label for="r2">Offset dall'origine:</label><div class="spin off"><input id="r2" type="text" value="0.625" disabled><span><button disabled aria-label="Su"></button><button disabled aria-label="Giù"></button></span></div>
        <label class="fixed"><input type="checkbox" disabled>Linee estensione a lunghezza fissa</label>
        <label class="len" for="r3">Lunghezza:</label><div class="spin off"><input id="r3" type="text" value="1" disabled><span><button disabled aria-label="Su"></button><button disabled aria-label="Giù"></button></span></div>
      </div>
    </fieldset>
  </div>
  <div class="dfoot"><button class="ok">OK</button><button>Annulla</button><button>?</button></div>
  <div class="halo"></div>
  <svg class="pointer" viewBox="0 0 18 28"><path d="M3 5l14 13-5 1 3 6-4 2-3-6-5 4z" fill="#f4f4dc"/><path d="M1 1v12l3-3 2 4 2-1-2-4h4z" fill="#eee" stroke="#444"/></svg>
</section>
</div>
</body>
</html>
```
FILE: styles.css
```
* { box-sizing: border-box; }
body { margin: 0; min-height: 100vh; display: flex; flex-direction: column; background: #1f232d; color: #d6d8dc; font: 10px/14px "Open Sans", "Noto Sans", sans-serif; overflow: hidden; position: relative; }
button, input, select { font: inherit; color: inherit; margin: 0; border: 0; padding: 0; background: none; border-radius: 0; }
svg { flex: none; }
h1, h2 { font: inherit; margin: 0; }
.defs { position: absolute; width: 0; height: 0; }
.dd { width: 6px; height: 4px; }
.ln { fill: none; stroke: currentColor; }
.ln.br { stroke: #a6a9b2; }

.titlebar { display: flex; height: 36px; background: #222630; }
.brand { width: 37px; padding: 3px 0 0 6px; }
.brand svg { width: 20px; height: 24px; }
.title-main { flex: 1; min-width: 0; }
.titlerow { display: flex; align-items: center; height: 18px; }
.quick { display: flex; align-items: center; gap: 6px; width: 228px; padding-left: 3px; }
.quick button, .extras button, .account button { display: flex; align-items: center; }
.quick button svg { width: 14px; height: 14px; }
.quick .custom { width: 8px; height: 8px; }
.titlerow h1 { width: 242px; white-space: nowrap; color: #e4e5e8; }
.path { width: 294px; white-space: nowrap; color: #e4e5e8; }
.tri { width: 5px; height: 8px; margin-right: 5px; }
.help-search { width: 148px; height: 17px; background: #3c4456; padding-left: 3px; font: italic 10px/14px "Open Sans", sans-serif; }
.help-search::placeholder { color: #a4a9b4; opacity: 1; }
.account { display: flex; gap: 7px; margin-left: 4px; }
.account svg, .extras button svg { width: 13px; height: 13px; }
.login { gap: 4px; }
.extras { display: flex; align-items: center; gap: 6px; margin-left: auto; }
.vsep { width: 1px; height: 14px; background: #444a56; margin: 0 2px; }
.extras .help { width: 14px; height: 14px; justify-content: center; background: #e4e4e4; border-radius: 50%; color: #333; font-weight: 600; }
.winbtns { display: flex; gap: 10px; margin: 0 4px 0 56px; }
.winbtns svg { width: 10px; height: 10px; }
.winbtns button { display: flex; }
.ribbon-tabs { display: flex; align-items: center; height: 18px; padding-top: 3px; }
.ribbon-tabs button { height: 15px; padding: 0 7px; color: #b4b8c0; white-space: nowrap; }
.ribbon-tabs .on { background: #3b4453; color: #e4e5e8; padding: 0 8px; }
.minrib { width: 20px; height: 8px; margin-left: 18px; }

.ribbon { display: flex; height: 82px; background: #3b4152; color: #797d8c; }
.panel { display: flex; flex-direction: column; min-width: 0; border-right: 1px solid #2c313d; }
.p-dis { flex: 204; } .p-edi { flex: 145; } .p-ann { flex: 108; } .p-lay { flex: 223; } .p-blo { flex: 71; } .p-pro { flex: 209; }
.p-gru { flex: 64; } .p-uti { flex: 73; } .p-app { flex: 72; } .p-vis { flex: 53; } .p-toc { flex: 58; }
.pbody { flex: 1; display: flex; justify-content: center; padding-top: 3px; background: #3c4152; }
.cap { display: flex; align-items: center; justify-content: center; gap: 6px; height: 17px; background: #39444f; color: #d3d6db; }
.launch { width: 6px; height: 6px; }
.big { display: flex; flex-direction: column; align-items: center; line-height: 13px; padding-top: 1px; white-space: nowrap; }
.big > svg:first-child { width: 28px; height: 28px; margin-bottom: 2px; }
.big .dd { margin-top: 2px; color: #b8bbc2; }
.w34 { width: 36px; } .w40 { width: 40px; } .w44 { width: 44px; } .w46 { width: 46px; } .w48 { width: 48px; } .w50 { width: 54px; } .w62 { width: 62px; } .w76 { width: 78px; }
.big.tall { padding-top: 4px; }
.col { display: flex; flex-direction: column; }
.sm { display: flex; align-items: center; gap: 4px; height: 20px; padding: 0 2px; }
.sm > svg:first-child { width: 14px; height: 14px; }
.sm .dd { color: #b8bbc2; }
.sm.pressed { outline: 1px solid #5690b4; outline-offset: -1px; background: #3e5266; }
.laygrid { display: flex; flex-direction: column; gap: 3px; flex: 1; padding: 1px 3px 0 2px; }
.combo { position: relative; display: flex; align-items: center; height: 18px; background: #4a5266; border: 1px solid #343a48; }
.combo select { appearance: none; flex: 1; height: 16px; color: #a0a4ae; padding-left: 66px; }
.combo .dd { position: absolute; right: 4px; color: #c4c8ce; pointer-events: none; }
.states { position: absolute; left: 2px; width: 62px; height: 15px; }
.icons5 { display: flex; gap: 5px; padding-left: 1px; }
.icons5 > svg { width: 15px; height: 17px; }
.props { flex: 1; display: grid; grid-template-columns: 16px 1fr; grid-auto-rows: 18px; gap: 2px 4px; padding: 1px 1px 0 0; align-items: center; }
.props > svg { width: 14px; height: 14px; }
.swatch { position: absolute; left: 4px; width: 13px; height: 13px; background: #2eaa9f; border: 1px solid #222; }
.props .combo select { padding-left: 25px; }
.props .line select { padding-left: 53px; color: #7f8492; }
.line::before { content: ""; position: absolute; left: 1px; width: 50px; height: 1px; background: #8d919d; }

.doctabs { display: flex; align-items: flex-end; gap: 3px; height: 25px; padding-left: 15px; background: #222630; border-bottom: 4px solid #3b4453; }
.dt { height: 17px; padding: 0 11px; text-align: left; background: #2c323e; border-radius: 8px 8px 0 0; color: #b8bcc4; }
.start { width: 103px; }
.dt.on { display: flex; align-items: center; justify-content: space-between; width: 142px; padding: 0 13px 0 7px; background: #3b4453; color: #e0e2e6; white-space: nowrap; }
.dt svg { width: 8px; height: 8px; }
.dt.plus { width: 21px; padding: 0 6px; }

.canvas { position: relative; flex: 1; min-height: 300px; background: #000; overflow: hidden; }
.drawing { position: absolute; inset: 0; width: 100%; height: 100%; font-family: "Liberation Sans", Arial, sans-serif; }
.frame { fill: none; stroke: #b4b4b4; stroke-width: 1; }
.green { fill: none; stroke: #3fc62f; }
.cy { fill: none; stroke: #43a898; }
.cy .tip { fill: #52d8c4; }
.red { fill: none; stroke: #8d1212; }
.white { fill: none; stroke: #ccc; }
.gt { fill: #22f522; }
.ct { fill: #4fead6; font-size: 16px; }
.ct .tiny { font-size: 7px; fill: #ccc; }
.ucs { fill: none; stroke: #ccc; }
.cube circle { fill: none; stroke: #303030; stroke-width: 8; }
.cube text { font: bold 15px "Open Sans", sans-serif; fill: #b8b8b8; text-anchor: middle; }
.cube .alto { font: bold 9px "Liberation Sans", sans-serif; fill: #4a4c58; }
.cube .wcs { font: 9px "Liberation Sans", sans-serif; fill: #55555f; text-anchor: start; }
.nav rect { fill: #464646; }
.ni { fill: none; stroke: #2e2e2e; stroke-width: 1.500; }
.docbtns { position: absolute; top: 7px; right: 7px; display: flex; gap: 7px; }
.docbtns svg { width: 10px; height: 10px; display: block; }
.cmd { position: absolute; left: 10%; right: 10%; bottom: 1px; display: flex; align-items: center; height: 36px; background: rgba(222, 222, 222, .8); }
.cmdtools { display: flex; align-items: center; gap: 6px; width: 47px; height: 36px; padding-left: 3px; background: #232733; }
.cmdtools button { display: flex; }
.cmdtools > svg { width: 5px; height: 16px; }
.cmdtools button svg { width: 9px; height: 12px; }
.cmdtools button + button svg { width: 13px; }
.prompt svg { width: 22px; height: 12px; margin: 0 0 0 3px; display: block; }
.cmd input { flex: 1; color: #222; font: 10px/14px "DejaVu Sans Mono", monospace; padding-left: 1px; }
.cmdup { width: 6px; height: 4px; margin-right: 4px; }

.status { display: flex; height: 24px; background: #222834; }
.layouts { display: flex; gap: 2px; padding-left: 10px; }
.layouts button { height: 17px; width: 52px; background: #2a303c; border-radius: 0 0 8px 8px; color: #a4a8b2; }
.layouts .on { width: 56px; background: #3b4453; color: #fff; font-weight: 600; }
.layouts button:last-child { width: 20px; }
.layouts svg { width: 8px; height: 8px; }
.stright { display: flex; align-items: center; margin-left: auto; }
.coord, .model { height: 21px; line-height: 21px; background: #323a49; color: #d6d8dc; text-align: right; margin-right: 2px; }
.coord { width: 117px; padding-right: 4px; }
.model { width: 52px; text-align: center; }
.sticons { display: flex; background: #343c4b; height: 21px; }
.sticons button { display: flex; align-items: center; justify-content: center; width: 20px; color: #d4d6da; }
.sticons button > svg { width: 14px; height: 14px; }
.sticons .dd, .sticons button > .dd { width: 7px; height: 5px; }
.sticons .n { width: 14px; } .sticons .nn { width: 10px; } .sticons .w22 { width: 22px; } .sticons .w28 { width: 28px; }
.sticons .gap { width: 3px; background: #232834; }
.sticons .act { background: #5588bd; border: 1px solid #3f6592; border-width: 0 1px; }
.st { fill: none; stroke: #d4d6da; }

.taskbar { display: flex; height: 33px; background: #1c1c1c; color: #eee; }
.win { width: 40px; }
.win svg { width: 14px; height: 14px; display: block; margin: auto; }
.wsearch { display: flex; align-items: center; gap: 9px; width: 286px; padding-left: 10px; background: #f2f2f2; color: #444; }
.wsearch svg { width: 14px; height: 14px; }
.wsearch input { flex: 1; font-size: 12px; }
.wsearch input::placeholder { color: #444; opacity: 1; }
.apps { display: grid; grid-template-columns: repeat(12, 1fr); width: 496px; }
.apps button { position: relative; padding-bottom: 2px; }
.apps svg { width: 20px; height: 20px; display: block; margin: auto; }
.apps .run::after { content: ""; position: absolute; left: 4px; right: 3px; bottom: 0; height: 2px; background: #76b9ed; }
.apps .cur { background: #484848; }
.apps .cur2 { background: #2c2c2c; }
.apps .cur::after, .apps .cur2::after { left: 0; right: 0; }
.badge b, .notif b { position: absolute; right: 3px; bottom: 4px; width: 13px; height: 13px; border: 1px solid #999; border-radius: 50%; background: #333; font-size: 9px; line-height: 11px; text-align: center; }
.tray { display: flex; align-items: center; gap: 6px; margin-left: auto; }
.tray > svg { width: 14px; height: 14px; }
.tr { fill: none; stroke: #e4e4e4; }
.ita { padding-left: 4px; }
.clock { width: 60px; text-align: center; line-height: 15px; }
.notif { position: relative; width: 22px; height: 33px; margin-right: 17px; }
.notif svg { width: 14px; height: 14px; display: block; margin: auto; }
.notif b { right: -3px; }

.overlay { position: absolute; inset: 0; display: flex; justify-content: center; align-items: flex-start; padding-top: 127px; pointer-events: none; }
.dialog { position: relative; pointer-events: auto; width: 502px; background: #f0f0f0; border: 1px solid #444; color: #222; font: 9px/12px "Liberation Sans", Arial, sans-serif; }
.dhead { display: flex; align-items: center; gap: 3px; height: 25px; padding: 0 9px 0 5px; background: #fff; }
.dhead svg { width: 14px; height: 14px; }
.dhead h2 { flex: 1; font: 10px/14px "Open Sans", sans-serif; }
.dhead button svg { width: 9px; height: 9px; display: block; }
.dtabs { display: flex; align-items: flex-end; height: 23px; padding-left: 5px; }
.dtabs button { height: 14px; border: 1px solid #d9d9d9; border-width: 1px 1px 0 0; white-space: nowrap; padding: 0 4px 0 2px; }
.dtabs .on { width: 34px; height: 16px; background: #fff; border-left-width: 1px; padding-bottom: 2px; }
.page { margin: 0 6px 0 5px; height: 344px; padding: 4px 4px 0 2px; background: #fff; border: 1px solid #dcdcdc; }
.top { display: flex; gap: 8px; }
fieldset { margin: 0; border: 1px solid #dcdcdc; min-width: 0; padding: 0 5px 0 6px; }
legend { padding: 0 3px 0 0; line-height: 12px; margin-left: -1px; }
fieldset label { white-space: nowrap; }
.fs1 { width: 246px; height: 160px; display: grid; grid-template-columns: minmax(0, 1fr) auto; grid-auto-rows: 24px; align-items: center; }
.fs1 > label, .left > label { padding-top: 2px; }
.fs1 > div { justify-self: end; }
.sel { position: relative; width: 144px; height: 18px; background: #e1e1e1; border: 1px solid #adadad; }
.sel select { appearance: none; width: 100%; height: 16px; padding-left: 43px; font-size: 10px; display: block; opacity: 1; }
.sel.color select { padding-left: 15px; }
.sel.color::before { content: ""; position: absolute; left: 2px; top: 2px; width: 11px; height: 11px; border: 1px solid #333; background: #fff; pointer-events: none; }
.sel.ltype::before { content: ""; position: absolute; left: 4px; top: 8px; width: 36px; height: 1px; background: #333; }
.sel.thin::before { background: #777; }
.sel::after { content: ""; position: absolute; right: 4px; top: 4px; width: 5px; height: 5px; border: 1px solid #666; border-width: 0 1px 1px 0; transform: rotate(45deg); pointer-events: none; }
.sel.focus select { outline: 1px dotted #555; outline-offset: -1px; width: 127px; }
.left .sel { width: 116px; background: #ccc; border-color: #bbb; }
.sel.off::after { border-color: #aaa; }
.spin { display: flex; width: 63px; height: 19px; border: 1px solid #888; background: #fff; }
.spin input { flex: 1; width: 20px; padding: 0 0 3px 2px; background: #fff; }
.spin span { display: flex; flex-direction: column; width: 13px; background: #eee; border-left: 1px solid #aaa; }
.spin span button { flex: 1; display: flex; align-items: center; justify-content: center; border-bottom: 1px solid #bbb; }
.spin span button::before { content: ""; border: 2px solid transparent; border-top-width: 0; border-bottom: 3px solid #222; }
.spin span button + button { border: 0; }
.spin span button + button::before { border: 2px solid transparent; border-bottom-width: 0; border-top: 3px solid #222; }
.spin.off { border-color: #ccc; color: #777; }
.spin.off span { border-color: #ccc; }
.spin.off span button::before { border-bottom-color: #666; }
.spin.off span button + button::before { border-bottom-color: transparent; border-top-color: #666; }
.checks { grid-column: 1 / -1; justify-self: start; display: flex; align-items: center; padding-top: 4px; width: 100%; }
.checks span { flex: none; width: 68px; }
.checks label, .fixed { display: flex; flex: none; align-items: center; gap: 2px; width: 87px; }
.checks label:last-child { width: auto; }
input[type="checkbox"] { appearance: none; width: 11px; height: 11px; border: 1px solid #444; background: #fff; flex: none; position: relative; }
input[type="checkbox"]:checked::after { content: ""; position: absolute; left: 3px; top: 0; width: 3px; height: 6px; border: 1px solid #222; border-width: 0 1px 1px 0; transform: rotate(40deg); }
.preview { width: 228px; height: 138px; margin-top: 6px; background: #000; border: 1px solid #888; }
.pt { fill: #fff; font: bold 11px "Liberation Sans", sans-serif; text-anchor: middle; }
.fs2 { width: 475px; height: 132px; margin-top: 6px; display: grid; grid-template-columns: 233px 1fr; }
.left { display: grid; grid-template-columns: 1fr auto; grid-auto-rows: 24px; align-items: center; align-content: start; margin-top: -5px; }
.left .sel { justify-self: end; }
.right { display: grid; grid-template-columns: 1fr auto; grid-template-rows: 28px 30px 28px 20px; align-items: center; align-content: start; padding: 0 5px 0 17px; margin-top: -3px; }
.right .fixed { grid-column: 1 / -1; width: auto; color: #777; }
.fixed input { border-color: #bbb; }
.len { padding-left: 38px; }
.dfoot { display: flex; justify-content: flex-end; gap: 20px; padding: 8px 6px 8px 5px; }
.dfoot button { width: 65px; height: 18px; background: #e1e1e1; border: 1px solid #adadad; }
.dfoot .ok { border: 2px solid #2a76b8; }
.halo { position: absolute; left: 212px; top: 260px; width: 60px; height: 60px; border-radius: 50%; background: #c8e14b; mix-blend-mode: multiply; box-shadow: 2px 3px 5px rgba(0, 0, 0, .4); pointer-events: none; }
.pointer { position: absolute; left: 236px; top: 276px; width: 18px; height: 28px; pointer-events: none; }
```
